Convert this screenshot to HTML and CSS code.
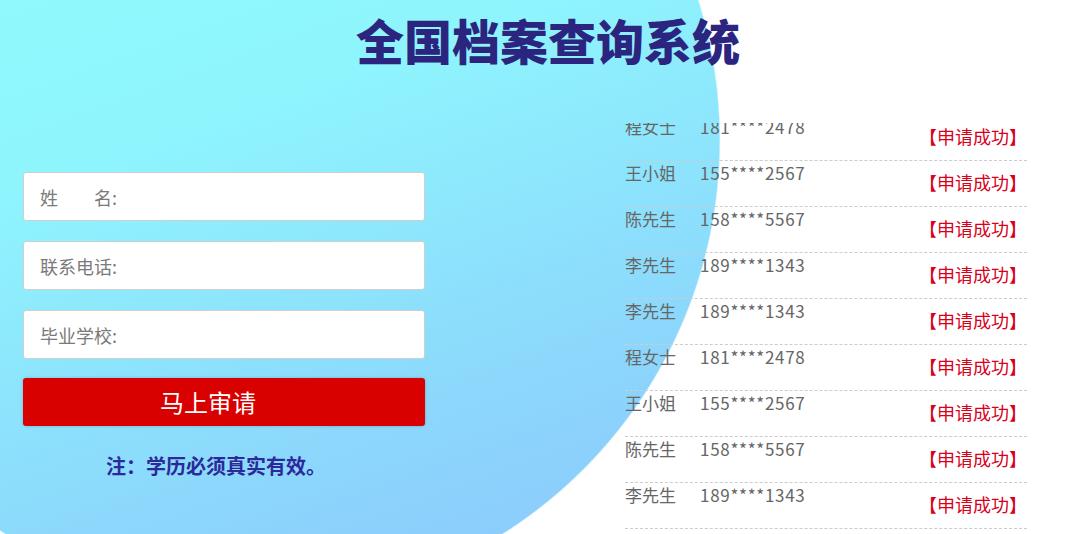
FILE: index.html
```html
<!DOCTYPE html>
<html lang="zh-CN">
<head>
<meta charset="utf-8">
<title>全国档案查询系统</title>
<link rel="stylesheet" href="styles.css">
</head>
<body>
<div class="page">
  <h1 class="title">全国档案查询系统</h1>
  <div class="main">
    <form class="form">
      <input class="field" type="text" placeholder="姓　　名:">
      <input class="field" type="text" placeholder="联系电话:">
      <input class="field" type="text" placeholder="毕业学校:">
      <button class="submit" type="button">马上审请</button>
      <p class="note">注：学历必须真实有效。</p>
    </form>
    <div class="ticker">
      <ul class="list">
        <li class="row"><span class="name">程女士</span><span class="phone">181****2478</span><span class="status">【申请成功】</span></li>
        <li class="row"><span class="name">王小姐</span><span class="phone">155****2567</span><span class="status">【申请成功】</span></li>
        <li class="row"><span class="name">陈先生</span><span class="phone">158****5567</span><span class="status">【申请成功】</span></li>
        <li class="row"><span class="name">李先生</span><span class="phone">189****1343</span><span class="status">【申请成功】</span></li>
        <li class="row"><span class="name">李先生</span><span class="phone">189****1343</span><span class="status">【申请成功】</span></li>
        <li class="row"><span class="name">程女士</span><span class="phone">181****2478</span><span class="status">【申请成功】</span></li>
        <li class="row"><span class="name">王小姐</span><span class="phone">155****2567</span><span class="status">【申请成功】</span></li>
        <li class="row"><span class="name">陈先生</span><span class="phone">158****5567</span><span class="status">【申请成功】</span></li>
        <li class="row"><span class="name">李先生</span><span class="phone">189****1343</span><span class="status">【申请成功】</span></li>
      </ul>
    </div>
  </div>
</div>
</body>
</html>
```
FILE: styles.css
```css
* { box-sizing: border-box; }
html, body {
  margin: 0;
  padding: 0;
  width: 1081px;
  height: 534px;
  overflow: hidden;
}
body {
  font-family: "Noto Sans CJK SC", "Noto Sans", sans-serif;
  background:
    radial-gradient(circle 466px at 254px 140px, rgba(255,255,255,0) 465px, #ffffff 466.5px),
    linear-gradient(160deg, #8ff9fd 0%, #8ef4fd 22%, #8cd8fc 60%, #8bbffc 100%);
}
.page {
  width: 1081px;
  height: 534px;
}
.title {
  margin: 0;
  padding: 10px 0 0 15px;
  height: 123px;
  line-height: 58px;
  font-size: 48px;
  font-weight: 900;
  color: #2b2580;
  text-align: center;
}
.main {
  display: flex;
  align-items: flex-start;
  padding-left: 23px;
  gap: 200px;
}
.form {
  width: 402px;
  margin: 49px 0 0 0;
  display: flex;
  flex-direction: column;
  gap: 20px;
}
.field {
  display: block;
  width: 402px;
  height: 49px;
  margin: 0;
  padding: 0 16px;
  border: 1px solid #cfcfcf;
  border-radius: 3px;
  background: #ffffff;
  font-family: "Noto Sans CJK SC", sans-serif;
  font-size: 18px;
  color: #555;
  outline: none;
}
.field::placeholder {
  color: #7a7a7a;
  opacity: 1;
}
.submit {
  display: block;
  width: 402px;
  height: 48px;
  margin: -1px 0 0 0;
  border: 0;
  border-radius: 3px;
  background: #d90000;
  box-shadow: 0 0 3px rgba(80, 80, 120, 0.35);
  color: #ffffff;
  font-family: "Noto Sans CJK SC", sans-serif;
  font-size: 24px;
  line-height: 48px;
  padding: 0 32px 0 0;
}
.note {
  margin: 5px 0 0 0;
  padding-right: 16px;
  text-align: center;
  font-size: 20px;
  font-weight: 700;
  line-height: 30px;
  color: #2c2a9a;
}
.ticker {
  width: 402px;
  height: 407px;
  overflow: hidden;
}
.list {
  list-style: none;
  margin: -8px 0 0 0;
  padding: 0;
}
.row {
  display: flex;
  align-items: flex-start;
  height: 46px;
  border-bottom: 1px dashed #cccccc;
}
.name {
  font-size: 17px;
  line-height: 24px;
  color: #666666;
  margin-right: 24px;
}
.phone {
  font-size: 17px;
  line-height: 24px;
  letter-spacing: 0.7px;
  color: #666666;
}
.status {
  margin-left: auto;
  padding-top: 9px;
  font-size: 18px;
  line-height: 24px;
  color: #d8001a;
}
```
